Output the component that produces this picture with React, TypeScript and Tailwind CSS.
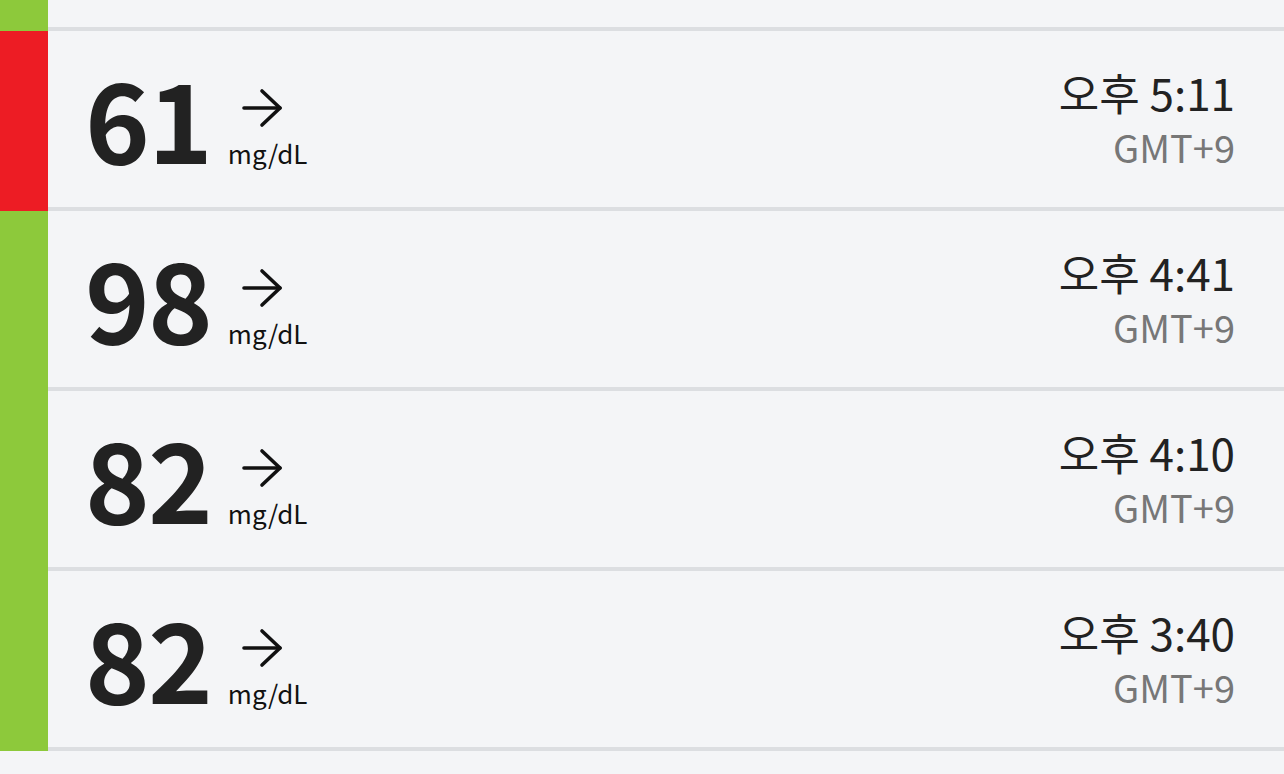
import React from 'react'

type Reading = {
  value: number
  time: string
  tone: 'low' | 'ok'
}

const readings: Reading[] = [
  { value: 61, time: '오후 5:11', tone: 'low' },
  { value: 98, time: '오후 4:41', tone: 'ok' },
  { value: 82, time: '오후 4:10', tone: 'ok' },
  { value: 82, time: '오후 3:40', tone: 'ok' },
]

const ArrowRight = () => (
  <svg width="42" height="40" viewBox="0 0 42 40" fill="none" stroke="#111" strokeWidth="3.6" strokeLinecap="round" strokeLinejoin="round">
    <path d="M3 20h36" />
    <path d="M21 3l18 17-18 17" />
  </svg>
)

const ReadingRow: React.FC<{ reading: Reading }> = ({ reading }) => (
  <div className="flex h-[180px]">
    <div className={reading.tone === 'low' ? 'w-[48px] bg-[#ed1c24]' : 'w-[48px] bg-[#8dc93b]'} />
    <div className="flex flex-1 items-center justify-between border-b-4 border-[#dcdee1] pl-[37px] pr-[49px]">
      <div className="mb-[6px] flex items-end">
        <span className="text-[110px] font-bold leading-none tracking-[-2px] text-[#222]">{reading.value}</span>
        <div className="ml-[17px] mb-[5px] flex flex-col items-start">
          <div className="ml-[13px] mb-[12px]">
            <ArrowRight />
          </div>
          <span className="text-[26px] leading-none text-[#111]">mg/dL</span>
        </div>
      </div>
      <div className="mt-[-2px] flex flex-col items-end">
        <span className="text-[44px] leading-[58px] text-[#222]">{reading.time}</span>
        <span className="text-[38px] leading-[52px] text-[#777]">GMT+9</span>
      </div>
    </div>
  </div>
)

export default function App() {
  return (
    <div
      className="min-h-[774px] w-full bg-[#f4f5f7]"
      style={{ fontFamily: '"Noto Sans CJK KR", "Noto Sans", sans-serif' }}
    >
      {/* tail of the previous entry */}
      <div className="flex h-[31px]">
        <div className="w-[48px] bg-[#8dc93b]" />
        <div className="flex-1 border-b-4 border-[#dcdee1]" />
      </div>
      {readings.map((r, i) => (
        <ReadingRow key={i} reading={r} />
      ))}
    </div>
  )
}
